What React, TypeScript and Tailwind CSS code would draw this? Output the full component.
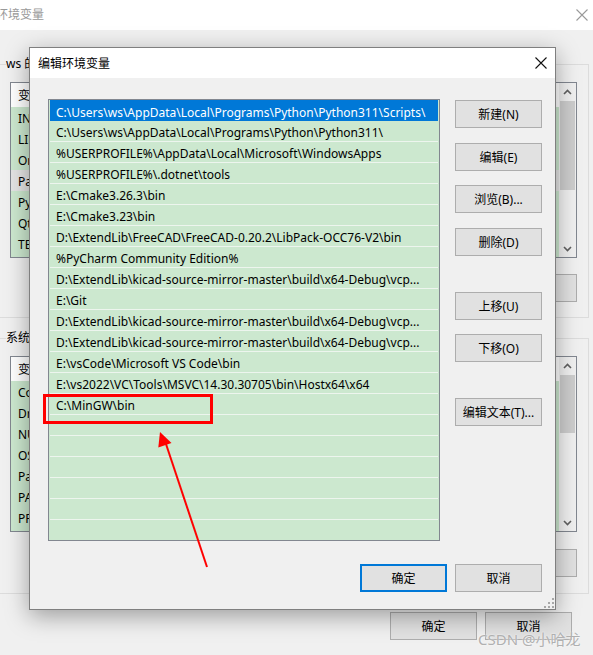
const font = "font-['Noto_Sans','Noto_Sans_CJK_SC',sans-serif]";

const paths = [
  "C:\\Users\\ws\\AppData\\Local\\Programs\\Python\\Python311\\Scripts\\",
  "C:\\Users\\ws\\AppData\\Local\\Programs\\Python\\Python311\\",
  "%USERPROFILE%\\AppData\\Local\\Microsoft\\WindowsApps",
  "%USERPROFILE%\\.dotnet\\tools",
  "E:\\Cmake3.26.3\\bin",
  "E:\\Cmake3.23\\bin",
  "D:\\ExtendLib\\FreeCAD\\FreeCAD-0.20.2\\LibPack-OCC76-V2\\bin",
  "%PyCharm Community Edition%",
  "D:\\ExtendLib\\kicad-source-mirror-master\\build\\x64-Debug\\vcp...",
  "E:\\Git",
  "D:\\ExtendLib\\kicad-source-mirror-master\\build\\x64-Debug\\vcp...",
  "D:\\ExtendLib\\kicad-source-mirror-master\\build\\x64-Debug\\vcp...",
  "E:\\vsCode\\Microsoft VS Code\\bin",
  "E:\\vs2022\\VC\\Tools\\MSVC\\14.30.30705\\bin\\Hostx64\\x64",
  "C:\\MinGW\\bin",
  "", "", "", "", "", "",
];

const userVars = ["INCLUDE", "LIB", "OneDrive", "Path", "PyCharm Community Edition", "QtMsvc", "TEMP", "TMP"];
const sysVars = ["ComSpec", "DriverData", "NUMBER_OF_PROCESSORS", "OS", "Path", "PATHEXT", "PROCESSOR_ARCHITECTURE"];

function CloseX({ grey = false }: { grey?: boolean }) {
  return (
    <svg width="12" height="12" viewBox="0 0 12 12">
      <path d="M0.5 0.5 L11.5 11.5 M11.5 0.5 L0.5 11.5" stroke={grey ? "#9a9a9a" : "#111"} strokeWidth="1.1" fill="none" />
    </svg>
  );
}

function Chevron({ up }: { up?: boolean }) {
  return (
    <svg width="9" height="6" viewBox="0 0 9 6">
      <path d={up ? "M1 5 L4.5 1.5 L8 5" : "M1 1 L4.5 4.5 L8 1"} stroke="#606060" strokeWidth="1.6" fill="none" />
    </svg>
  );
}

function Btn({ children, primary = false }: { children: React.ReactNode; primary?: boolean }) {
  return (
    <div
      className={`flex h-[28px] w-[87px] shrink-0 items-center justify-center bg-[#e1e1e1] pt-[1px] text-[12px] text-black ${
        primary ? "border-2 border-[#0078d7]" : "border border-[#adadad]"
      }`}
    >
      {children}
    </div>
  );
}

function BgList({ rows, selected, thumb }: { rows: string[]; selected: number; thumb: number }) {
  return (
    <div className="flex h-[176px] border border-[#828790] bg-[#cce8cf]">
      <div className="flex-1 overflow-hidden">
        <div className="flex h-[24px] items-center bg-white pl-[7px] pt-[2px] text-[12px]">变量</div>
        {rows.map((r, i) => (
          <div
            key={i}
            className={`flex h-[21px] items-center pl-[7px] pt-[2px] text-[12px] ${i === selected ? "bg-[#e4e4e4]" : ""}`}
          >
            {r}
          </div>
        ))}
      </div>
      <div className="flex w-[17px] flex-col items-center bg-[#f0f0f0]">
        <div className="flex h-[17px] items-center justify-center">
          <Chevron up />
        </div>
        <div className="mt-[1px] w-[15px] bg-[#cdcdcd]" style={{ height: thumb }} />
        <div className="flex-1" />
        <div className="flex h-[17px] items-center justify-center">
          <Chevron />
        </div>
      </div>
    </div>
  );
}

function Group({ label, children, className = "" }: { label: string; children: React.ReactNode; className?: string }) {
  return (
    <div className={`relative -ml-[3px] border border-[#dcdcdc] pl-[12px] pr-[11px] pt-[17px] ${className}`}>
      <span className="absolute -top-[9px] left-[8px] bg-[#f0f0f0] pr-[2px] text-[12px] leading-[16px]">{label}</span>
      {children}
    </div>
  );
}

function Dialog() {
  return (
    <div className="absolute left-[29px] top-[47px] flex h-[563px] w-[527px] flex-col border border-[#7f7f7f] bg-[#f0f0f0] shadow-[0_6px_22px_rgba(0,0,0,0.35)]">
      <div className="flex h-[30px] shrink-0 items-center justify-between bg-white pl-[8px] pr-[8px]">
        <span className="pt-[1px] text-[12px] text-black">编辑环境变量</span>
        <CloseX />
      </div>
      <div className="flex flex-1 flex-col pl-[18px] pr-[13px] pt-[21px]">
        <div className="flex">
          <div className="h-[442px] w-[392px] shrink-0 overflow-hidden border border-[#828790] bg-[#cce8cf]">
            {paths.map((p, i) => (
              <div
                key={i}
                className={`mx-[1px] flex h-[21px] items-center truncate whitespace-nowrap pl-[6px] pt-[4px] text-[12px] ${
                  i === 0 ? "bg-[#0078d7] text-white" : "border-b border-[#edf5ee] text-black"
                }`}
              >
                {p}
              </div>
            ))}
          </div>
          <div className="ml-[15px] flex flex-col pt-[1px]">
            <Btn>新建(N)</Btn>
            <div className="mt-[15px]"><Btn>编辑(E)</Btn></div>
            <div className="mt-[14px]"><Btn>浏览(B)...</Btn></div>
            <div className="mt-[15px]"><Btn>删除(D)</Btn></div>
            <div className="mt-[36px]"><Btn>上移(U)</Btn></div>
            <div className="mt-[14px]"><Btn>下移(O)</Btn></div>
            <div className="mt-[36px]"><Btn>编辑文本(T)...</Btn></div>
          </div>
        </div>
        <div className="mt-[23px] flex justify-end gap-[8px]">
          <Btn primary>确定</Btn>
          <Btn>取消</Btn>
        </div>
      </div>
      <svg className="absolute bottom-[1px] right-[1px]" width="11" height="11" viewBox="0 0 11 11">
        {[
          [8, 0], [4, 4], [8, 4], [0, 8], [4, 8], [8, 8],
        ].map(([x, y], i) => (
          <rect key={i} x={x + 1} y={y + 1} width="2" height="2" fill="#a8a8a8" />
        ))}
      </svg>
    </div>
  );
}

export default function App() {
  return (
    <div className={`relative h-[655px] w-[593px] overflow-hidden bg-[#f0f0f0] text-black ${font}`}>
      <div className="flex h-[30px] items-center justify-between bg-white">
        <span className="-ml-[4px] text-[12px] text-[#999]">环境变量</span>
        <div className="mr-[5px] flex items-center">
          <CloseX grey />
        </div>
      </div>
      <div className="pr-[4px] pt-[34px]">
        <Group label="ws 的用户变量(U)" className="pb-[15px]">
          <BgList rows={userVars} selected={3} thumb={89} />
          <div className="mt-[16px] flex justify-end gap-[9px]">
            <Btn>新建(N)...</Btn>
            <Btn>编辑(E)...</Btn>
            <Btn>删除(D)</Btn>
          </div>
        </Group>
        <Group label="系统变量(S)" className="mt-[20px] pb-[16px]">
          <BgList rows={sysVars} selected={-1} thumb={58} />
          <div className="mt-[17px] flex justify-end gap-[9px]">
            <Btn>新建(W)...</Btn>
            <Btn>编辑(I)...</Btn>
            <Btn>删除(L)</Btn>
          </div>
        </Group>
        <div className="mt-[18px] flex justify-end gap-[8px] pr-[17px]">
          <Btn>确定</Btn>
          <Btn>取消</Btn>
        </div>
      </div>

      <Dialog />

      <svg className="pointer-events-none absolute inset-0" width="593" height="655" viewBox="0 0 593 655">
        <rect x="44.5" y="395.5" width="167" height="27" fill="none" stroke="#ff0000" strokeWidth="3" />
        <line x1="207" y1="567" x2="166" y2="444" stroke="#ff0000" strokeWidth="2" />
        <polygon points="160,432 171.5,443 158.3,447.5" fill="#ff0000" />
      </svg>

      <span className="absolute left-[478px] top-[630px] text-[15px] leading-[18px] text-[#b0b0b0] [text-shadow:0_0_2px_#fff]">
        CSDN @小哈龙
      </span>
    </div>
  );
}
